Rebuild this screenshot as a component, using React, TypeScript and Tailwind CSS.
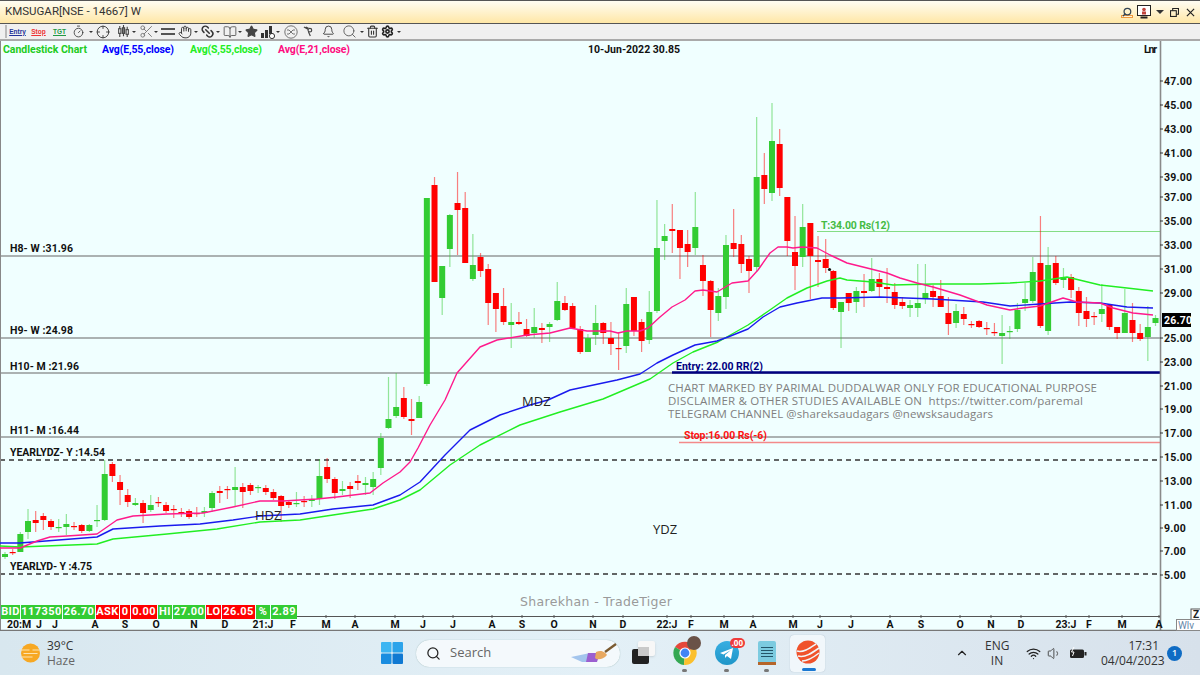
import {
  Bell,
  BookOpen,
  Crosshair,
  Hand,
  Link2,
  Scissors,
  Search,
  Settings,
  Star,
  Timer,
  Trash2,
  Volume1,
  Wifi,
  ChevronUp,
} from 'lucide-react';

// [green?, bodyTop, bodyBottom, wickTop, wickBottom], one per week, in page pixels
const candles: [number, number, number, number, number][] = [
  [1, 554, 557, 552, 559], [0, 552, 553, 549, 555], [1, 534, 552, 532, 552], [1, 521, 532, 509, 539],
  [0, 520, 523, 511, 532], [0, 516, 520, 513, 530], [0, 521, 527, 519, 530], [1, 527, 528, 519, 532],
  [1, 524, 527, 514, 535], [0, 526, 527, 522, 530], [0, 525, 531, 524, 533], [1, 525, 531, 524, 532],
  [1, 520, 521, 505, 527], [1, 474, 520, 460, 521], [0, 464, 476, 462, 482], [0, 482, 490, 475, 505],
  [0, 495, 502, 489, 507], [1, 503, 505, 498, 506], [0, 503, 513, 500, 523], [1, 505, 510, 495, 512],
  [0, 502, 503, 497, 507], [0, 505, 511, 502, 513], [0, 509, 510, 505, 518], [0, 512, 513, 508, 517],
  [0, 511, 517, 509, 519], [0, 513, 514, 507, 517], [1, 511, 513, 507, 517], [1, 493, 508, 491, 512],
  [0, 491, 493, 486, 503], [0, 489, 490, 486, 499], [1, 487, 490, 467, 507], [0, 487, 492, 483, 508],
  [0, 485, 491, 483, 495], [1, 487, 488, 485, 493], [0, 488, 492, 485, 495], [0, 492, 498, 489, 500],
  [0, 496, 506, 495, 522], [0, 502, 505, 500, 508], [1, 503, 504, 492, 507], [0, 501, 502, 496, 507],
  [1, 499, 501, 495, 507], [1, 476, 499, 459, 505], [0, 467, 479, 458, 483], [0, 479, 493, 477, 499],
  [1, 489, 491, 481, 495], [0, 486, 489, 482, 498], [0, 481, 483, 475, 490], [1, 483, 485, 477, 495],
  [1, 479, 487, 472, 495], [1, 438, 468, 433, 475], [1, 419, 428, 377, 429], [1, 407, 416, 373, 418],
  [0, 398, 417, 387, 419], [0, 419, 421, 399, 435], [1, 402, 418, 396, 418], [1, 198, 384, 198, 386],
  [0, 185, 282, 177, 282], [1, 266, 298, 266, 315], [1, 215, 249, 214, 267], [0, 203, 210, 172, 255],
  [0, 208, 263, 192, 263], [1, 265, 279, 234, 281], [0, 257, 271, 253, 277], [0, 269, 303, 264, 325],
  [0, 293, 309, 293, 332], [0, 306, 322, 288, 325], [1, 322, 325, 303, 348], [0, 322, 324, 312, 325],
  [0, 329, 336, 319, 337], [1, 327, 333, 308, 338], [0, 328, 330, 323, 343], [1, 324, 327, 322, 342],
  [1, 301, 320, 282, 321], [0, 303, 310, 296, 311], [0, 306, 328, 303, 328], [0, 329, 352, 326, 354],
  [1, 338, 352, 334, 352], [1, 323, 335, 305, 345], [0, 323, 333, 322, 344], [0, 338, 344, 322, 355],
  [0, 348, 349, 332, 370], [1, 304, 346, 288, 353], [0, 297, 331, 297, 336], [0, 322, 341, 319, 352],
  [1, 312, 340, 291, 344], [1, 248, 311, 200, 313], [1, 236, 241, 224, 260], [0, 229, 231, 204, 253],
  [0, 230, 248, 230, 279], [0, 244, 252, 230, 267], [1, 227, 248, 192, 255], [0, 265, 281, 255, 296],
  [0, 281, 310, 280, 337], [1, 296, 313, 288, 321], [1, 245, 297, 235, 309], [0, 243, 249, 209, 257],
  [0, 244, 264, 235, 273], [0, 259, 271, 256, 293], [1, 177, 267, 117, 272], [0, 175, 189, 153, 204],
  [1, 141, 193, 103, 201], [0, 144, 188, 129, 196], [0, 197, 241, 197, 256], [0, 252, 266, 216, 290],
  [1, 227, 257, 204, 267], [0, 223, 256, 223, 299], [0, 260, 262, 236, 287], [0, 259, 268, 239, 273],
  [0, 271, 308, 270, 310], [1, 302, 312, 302, 348], [0, 293, 303, 293, 311], [1, 291, 302, 287, 313],
  [0, 291, 293, 274, 307], [1, 279, 291, 258, 292], [0, 279, 287, 273, 297], [0, 287, 289, 268, 303],
  [0, 292, 305, 283, 309], [0, 302, 306, 297, 309], [1, 305, 308, 300, 317], [1, 303, 308, 264, 317],
  [1, 293, 299, 264, 304], [0, 291, 297, 285, 307], [0, 296, 307, 280, 307], [0, 313, 324, 297, 335],
  [1, 311, 323, 304, 328], [0, 314, 319, 307, 325], [0, 324, 325, 321, 328], [0, 321, 327, 320, 328],
  [0, 328, 329, 322, 335], [0, 332, 333, 323, 336], [1, 333, 336, 315, 364], [1, 331, 332, 326, 339],
  [1, 310, 329, 303, 332], [1, 299, 303, 283, 311], [1, 272, 301, 257, 303], [0, 263, 326, 216, 328],
  [1, 265, 331, 247, 335], [0, 263, 283, 256, 285], [1, 277, 280, 268, 288], [0, 277, 290, 274, 298],
  [0, 291, 313, 287, 326], [0, 311, 319, 297, 327], [0, 316, 317, 312, 325], [1, 309, 314, 284, 322],
  [0, 305, 327, 304, 330], [0, 327, 333, 327, 339], [1, 313, 333, 289, 333], [0, 320, 333, 303, 342],
  [0, 333, 339, 324, 341], [1, 327, 337, 306, 361], [1, 318, 323, 315, 326],
];

const emaFast = '0,548 20,548 37,541 50,537 67,536 97,534 107,527 117,520 133,516 167,514 203,513 233,507 260,501 283,501 317,499 337,497 370,493 383,483 400,472 410,462 418,448 430,425 445,400 457,373 480,347 497,340 527,335 550,333 570,328 587,331 610,331 618,333 627,331 640,331 648,328 660,317 672,307 685,300 695,291 703,290 717,292 732,283 748,281 758,270 770,253 778,247 787,247 793,248 802,247 817,248 830,255 847,263 867,268 887,273 900,278 917,283 933,287 960,295 987,305 1010,310 1023,308 1040,306 1063,298 1077,302 1100,303 1113,308 1133,313 1153,315';
const emaSlow = '0,543 20,543 97,537 113,529 160,526 200,524 233,520 260,516 300,514 333,509 373,505 400,495 420,482 445,455 470,430 500,415 530,405 548,400 570,390 617,380 640,374 657,363 673,355 695,345 717,341 728,337 748,329 763,317 780,307 797,303 822,298 840,298 880,297 933,299 983,302 1010,306 1040,304 1070,302 1100,303 1127,307 1153,308';
const smaSlow = '0,546 20,547 97,544 113,539 167,534 217,529 260,522 300,520 333,515 373,509 400,500 420,490 450,465 480,445 520,425 560,412 603,399 650,379 673,363 693,352 718,342 748,325 767,312 787,298 807,288 827,281 840,278 847,280 873,282 893,285 933,284 980,284 1010,283 1040,281 1067,277 1100,285 1127,288 1153,291';

const priceTicks: [string, number][] = [
  ['47.00', 81], ['45.00', 105], ['43.00', 129], ['41.00', 153], ['39.00', 177], ['37.00', 197], ['35.00', 221],
  ['33.00', 245], ['31.00', 269], ['29.00', 293], ['25.00', 338], ['23.00', 362], ['21.00', 386], ['19.00', 409],
  ['17.00', 433], ['15.00', 457], ['13.00', 481], ['11.00', 505], ['9.00', 528], ['7.00', 551], ['5.00', 575],
];

const monthTicks: [string, number][] = [
  ['20:M', 19], ['J', 39], ['J', 55], ['A', 95], ['S', 125], ['O', 156], ['N', 194], ['D', 225], ['21:J', 263], ['F', 293],
  ['M', 326], ['A', 355], ['M', 395], ['J', 423], ['J', 453], ['A', 492], ['S', 522], ['O', 554], ['N', 593], ['D', 623],
  ['22:J', 667], ['F', 691], ['M', 724], ['A', 753], ['M', 793], ['J', 820], ['J', 851], ['A', 890], ['S', 921], ['O', 960],
  ['N', 991], ['D', 1021], ['23:J', 1066], ['F', 1089], ['M', 1122], ['A', 1159],
];

const levels: [string, number, number, number][] = [
  ['H8- W :31.96', 10, 252, 63],
  ['H9- W :24.98', 10, 334, 63],
  ['H10- M :21.96', 10, 370, 69],
  ['H11- M :16.44', 10, 434, 69],
  ['YEARLYDZ- Y :14.54', 10, 456, 95],
  ['YEARLYD- Y :4.75', 10, 570, 82],
];

const quote: [string, string, number][] = [
  ['BID', 'g', 19], ['117350', 'g', 41], ['26.70', 'g', 32], ['ASK', 'r', 23], ['0', 'r', 10], ['0.00', 'r', 26],
  ['HI', 'g', 14], ['27.00', 'g', 32], ['LO', 'r', 15], ['26.05', 'r', 33], ['%', 'g', 14], ['2.89', 'g', 26],
];

function Caret({ className }: { className: string }) {
  return <span className={`h-0 w-0 border-x-[2px] border-t-[2px] border-x-transparent border-t-[#333] ${className}`} />;
}

function ChartArea() {
  return (
    <div className="h-[590px] w-full bg-[#f0ffff]">
      <svg viewBox="0 41 1200 590" className="block h-full w-full font-['Roboto',sans-serif]">
        {/* support / resistance levels */}
        <g fill="none">
          <path d="M0 256H1160M0 338H1160M0 373H1160M0 437H1160" stroke="#666" strokeWidth="1.2" />
          <path d="M0 460H1160M0 574H1160" stroke="#333" strokeWidth="1.4" strokeDasharray="5 4" />
          <path d="M817 231.5H1160" stroke="#85dd85" strokeWidth="1.2" />
          <path d="M679 442.5H1160" stroke="#f38a8a" strokeWidth="1.3" />
          <path d="M0.5 41V631" stroke="#888" />
        </g>

        {candles.map(([up, bodyTop, bodyBottom, wickTop, wickBottom], i) => {
          const x = 5 + 7.67 * i;
          const color = up ? '#33cc33' : '#ff0000';
          return (
            <g key={i}>
              <rect x={x - 0.6} y={wickTop} width={1.2} height={wickBottom - wickTop} fill={color} opacity={0.5} />
              <rect x={x - 3} y={bodyTop} width={6} height={Math.max(bodyBottom - bodyTop, 1.2)} fill={color} />
            </g>
          );
        })}

        <polyline points={smaSlow} fill="none" stroke="#22ee22" strokeWidth="1.4" strokeLinejoin="round" />
        <polyline points={emaSlow} fill="none" stroke="#1a1aee" strokeWidth="1.4" strokeLinejoin="round" />
        <polyline points={emaFast} fill="none" stroke="#ff1a8c" strokeWidth="1.4" strokeLinejoin="round" />
        <path d="M672 372.5H1160" stroke="#000080" strokeWidth="2.4" />
        <circle cx="829.5" cy="269.5" r="1.6" fill="#111" />

        {/* legend */}
        <g fontSize="10.5" fontWeight="700">
          <text x="3" y="53" fill="#22cc22" textLength="84">Candlestick Chart</text>
          <text x="102" y="53" fill="#0000ff" textLength="72">Avg(E,55,close)</text>
          <text x="190" y="53" fill="#22ee22" textLength="72">Avg(S,55,close)</text>
          <text x="278" y="53" fill="#ff0d80" textLength="72">Avg(E,21,close)</text>
          <text x="588" y="53" fill="#111" textLength="92">10-Jun-2022 30.85</text>
          <text x="1144" y="53" fill="#111" textLength="13">Lnr</text>
        </g>

        {levels.map(([label, x, y, width]) => (
          <text key={label} x={x} y={y} fontSize="10.5" fontWeight="700" fill="#111" textLength={width}>{label}</text>
        ))}

        <g fontSize="10.5" fontWeight="700">
          <text x="821" y="229" fill="#44bb44" textLength="69">T:34.00 Rs(12)</text>
          <text x="676" y="370" fill="#000080" textLength="87">Entry: 22.00 RR(2)</text>
          <text x="684" y="439" fill="#ff1111" textLength="83">Stop:16.00 Rs(-6)</text>
        </g>

        <g fontSize="11.5" fill="#808080" className="font-['Open_Sans',sans-serif]">
          <text x="668" y="392" textLength="429">CHART MARKED BY PARIMAL DUDDALWAR ONLY FOR EDUCATIONAL PURPOSE</text>
          <text x="668" y="405" textLength="415" className="whitespace-pre">DISCLAIMER &amp; OTHER STUDIES AVAILABLE ON  https://twitter.com/paremal</text>
          <text x="668" y="418" textLength="325">TELEGRAM CHANNEL @shareksaudagars @newsksaudagars</text>
        </g>

        <g fontSize="13" fill="#222" className="font-['Open_Sans',sans-serif]">
          <text x="522" y="406">MDZ</text>
          <text x="255" y="520">HDZ</text>
          <text x="653" y="534">YDZ</text>
        </g>
        <text x="520" y="606" fontSize="12.5" fill="#9a9a9a" textLength="152" className="font-['DejaVu_Sans',sans-serif]">Sharekhan - TradeTiger</text>

        {/* price axis */}
        <path d="M1160.5 41V631" stroke="#8a8a8a" strokeWidth="1.6" />
        {priceTicks.map(([label, y]) => (
          <g key={label}>
            <path d={`M1160 ${y}H1163`} stroke="#333" />
            <text x="1164" y={y + 4} fontSize="10.5" fontWeight="700" fill="#111" letterSpacing="0.2">{label}</text>
          </g>
        ))}
        <rect x="1162" y="313" width="29" height="14" fill="#000" />
        <text x="1164" y="324" fontSize="10.5" fontWeight="700" fill="#fff" letterSpacing="0.2">26.70</text>

        {/* time axis */}
        <path d="M297 616.5H1160" stroke="#555" />
        {monthTicks.map(([label, x], i) => (
          <g key={i}>
            {x > 300 && <path d={`M${x} 615V618`} stroke="#555" />}
            <text x={x} y="628" fontSize="10.5" fontWeight="700" fill="#111" textAnchor="middle">{label}</text>
          </g>
        ))}
        <path d="M0 630.5H1200" stroke="#777" strokeWidth="1.5" />
        <rect x="1191" y="609" width="10" height="11" fill="#fff" stroke="#555" />
        <text x="1193" y="618" fontSize="10" fontWeight="700" fill="#222">Z</text>
        <rect x="1176.5" y="619.5" width="30" height="11" fill="#fff" stroke="#888" />
        <text x="1178" y="629" fontSize="10" fill="#6688aa">Wlv</text>
      </svg>
    </div>
  );
}

function TitleBar() {
  return (
    <div className="flex h-[24px] items-center border-y border-[#555] bg-gradient-to-b from-[#fffdf2] to-[#ffe7a6] pl-[5px] pr-[4px] font-['Roboto',sans-serif] text-[11.5px] text-[#333]">
      <span className="flex-1">KMSUGAR[NSE - 14667] W</span>
      <div className="mr-[3px] flex flex-col items-center">
        <Search className="-mb-[2px] h-[10px] w-[10px] -scale-x-100 text-[#345]" strokeWidth={3} />
        <span className="h-[3px] w-[12px] border border-[#f19a3e] bg-[#fff3dc]" />
      </div>
      <svg viewBox="0 0 14 14" className="ml-[1px] h-[14px] w-[14px]">
        <rect x="0.5" y="0.5" width="13" height="10" fill="#fff" stroke="#222" />
        <circle cx="7" cy="4.5" r="1.8" fill="#c0443c" />
        <rect x="5" y="6.5" width="4" height="3" fill="#c0443c" />
        <rect x="3.5" y="11.5" width="7" height="2" fill="#222" />
      </svg>
      <span className="ml-[5px] h-0 w-0 border-x-[4px] border-t-[4px] border-x-transparent border-t-[#333]" />
      <svg viewBox="0 0 10 10" className="ml-[6px] h-[9px] w-[9px]" fill="none" stroke="#222" strokeWidth="1.2">
        <rect x="0.6" y="3" width="6.4" height="6.4" />
        <path d="M3 3V.6H9.4V7H7" />
      </svg>
      <svg viewBox="0 0 10 10" className="ml-[7px] mr-[1px] h-[9px] w-[9px]" stroke="#222" strokeWidth="1.3">
        <path d="M1 1 9 9M9 1 1 9" />
      </svg>
    </div>
  );
}

function Toolbar() {
  return (
    <div className="flex h-[17px] items-center border-b-2 border-[#aaa] bg-[#f0f0f0] pl-[5px] text-[#333]">
      <span className="h-[13px] w-[2px] border-x border-[#bbb]" />
      <span className="w-[21px] text-center font-['Liberation_Sans',sans-serif] text-[6.5px] font-bold text-[#223399] underline">Entry</span>
      <span className="w-[21px] text-center font-['Liberation_Sans',sans-serif] text-[6.5px] font-bold text-[#ee3333] underline">Stop</span>
      <span className="w-[21px] text-center font-['Liberation_Sans',sans-serif] text-[6.5px] font-bold text-[#229944] underline">TGT</span>
      <Timer className="ml-[2px] h-[13px] w-[13px]" strokeWidth={1.5} />
      <Caret className="ml-[4px]" />
      <Crosshair className="ml-[3px] h-[14px] w-[14px]" strokeWidth={1.5} />
      <svg viewBox="0 0 14 14" className="ml-[7px] h-[13px] w-[13px]" fill="none" stroke="#444" strokeWidth="1.2">
        <path d="M3 1V13M7 0V12M11 2V13" />
        <rect x="1.8" y="4" width="2.4" height="5" fill="#fff" />
        <rect x="5.8" y="3" width="2.4" height="6" fill="#777" />
        <rect x="9.8" y="5" width="2.4" height="5" fill="#fff" />
      </svg>
      <Caret className="ml-[2px]" />
      <Scissors className="ml-[3px] h-[15px] w-[15px] text-[#777]" strokeWidth={1.5} />
      <Caret className="ml-0" />
      <span className="ml-[3px] h-[7px] w-[14px] border-y-2 border-[#555]" />
      <Hand className="ml-[3px] h-[14px] w-[14px]" strokeWidth={1.6} />
      <Caret className="ml-[2px]" />
      <Link2 className="ml-[2px] h-[15px] w-[15px] rotate-45" strokeWidth={2.4} />
      <Caret className="ml-px" />
      <BookOpen className="ml-[3px] h-[14px] w-[14px] text-[#555]" strokeWidth={1.5} />
      <Caret className="ml-px" />
      <Star className="ml-[3px] h-[13px] w-[13px] fill-[#444] text-[#444]" />
      <svg viewBox="0 0 14 14" className="ml-[3px] h-[14px] w-[14px]" fill="#333">
        <rect x="0" y="8" width="3" height="5" />
        <rect x="4" y="5" width="3" height="8" />
        <rect x="8" y="1" width="3" height="8" />
        <circle cx="11" cy="11" r="2.6" fill="#fff" stroke="#333" />
      </svg>
      <Caret className="ml-px" />
      <svg viewBox="0 0 14 14" className="ml-[4px] h-[14px] w-[14px]" fill="none" stroke="#666" strokeWidth="0.9">
        <circle cx="7" cy="7" r="6.2" />
        <path d="M3 5H5L9 9H11M3 9H5L9 5H11" />
      </svg>
      <svg viewBox="0 0 12 12" className="ml-[5px] h-[11px] w-[11px]" fill="none" stroke="#444" strokeWidth="1.3">
        <circle cx="7.5" cy="4.5" r="2" />
        <path d="M6 6.5 8 11M1 1 5.5 3.5M3 1 6 2.5" />
      </svg>
      <Bell className="ml-[8px] h-[13px] w-[13px]" strokeWidth={1.6} />
      <Search className="ml-[7px] h-[15px] w-[15px] text-[#555]" strokeWidth={1.4} />
      <Caret className="ml-[3px]" />
      <Trash2 className="ml-[2px] h-[13px] w-[13px]" strokeWidth={2} />
      <Settings className="ml-[2px] h-[13px] w-[13px] text-[#222]" strokeWidth={3} />
      <Caret className="ml-[3px]" />
    </div>
  );
}

function QuoteStrip() {
  return (
    <div className="-mt-[26px] flex h-[14px] pl-[1px] font-['Roboto',sans-serif] text-[11px] font-bold leading-[14px] tracking-[0.4px] text-white">
      {quote.map(([label, tone, width], i) => (
        <span
          key={i}
          style={{ width }}
          className={`mr-px text-center ${tone === 'g' ? 'bg-[#33cc33]' : 'bg-[#ff0000]'}`}
        >
          {label}
        </span>
      ))}
    </div>
  );
}

function Taskbar() {
  return (
    <div className="mt-[12px] flex h-[44px] items-center bg-gradient-to-r from-[#d8e7ef] via-[#e3f0f7] to-[#d7e1eb] font-['Open_Sans',sans-serif]">
      {/* weather */}
      <svg viewBox="0 0 22 20" className="ml-[18px] h-[20px] w-[23px]">
        <circle cx="12" cy="10" r="9.5" fill="#f7a823" />
        <path d="M1 7H11M14 7H21M5 10.5H19M2 14H14" stroke="#fde3b0" strokeWidth="1.2" />
      </svg>
      <div className="ml-[6px] w-[60px] text-[12px] leading-[15px]">
        <div className="text-[#333]">39°C</div>
        <div className="text-[#666]">Haze</div>
      </div>

      {/* start */}
      <svg viewBox="0 0 22 22" className="ml-[274px] h-[22px] w-[22px]">
        <rect x="0" y="0" width="10.5" height="10.5" rx="1" fill="#3db5f2" />
        <rect x="11.5" y="0" width="10.5" height="10.5" rx="1" fill="#2ba3ea" />
        <rect x="0" y="11.5" width="10.5" height="10.5" rx="1" fill="#1a8de0" />
        <rect x="11.5" y="11.5" width="10.5" height="10.5" rx="1" fill="#1079d2" />
      </svg>

      {/* search pill */}
      <div className="ml-[13px] flex h-[27px] w-[204px] items-center rounded-full bg-[#f4f9fc] pl-[10px] shadow-[0_0_1px_#8aa]">
        <Search className="h-[15px] w-[15px] text-[#222]" strokeWidth={2} />
        <span className="ml-[9px] flex-1 text-[13px] text-[#666]">Search</span>
        <svg viewBox="0 0 48 20" className="mr-[2px] h-[20px] w-[48px]">
          <path d="M1 14 L20 10 L28 11 L26 19 L12 19 Z" fill="#8fb8e8" opacity="0.8" />
          <path d="M18 10 L30 10 L27 19 L16 19 Z" fill="#9b5fd0" />
          <path d="M26 9 C32 6 36 10 37 12 C33 17 27 17 25 15 Z" fill="#e8a860" />
          <path d="M35 9 L46 1" stroke="#7a5a30" strokeWidth="2.4" />
        </svg>
      </div>

      {/* task view */}
      <div className="relative ml-[12px] h-[24px] w-[23px]">
        <div className="absolute left-[6px] top-0 h-[15px] w-[17px] rounded-[2px] bg-[#f7f7f7] shadow-sm" />
        <div className="absolute bottom-[1px] left-0 h-[15px] w-[17px] rounded-[2px] bg-[#222]" />
        <div className="absolute left-[6px] top-[6px] h-[9px] w-[11px] bg-[#c9c9c9]" />
      </div>

      {/* chrome */}
      <div className="relative ml-[18px] h-[24px] w-[24px]">
        <svg viewBox="0 0 24 24" className="h-[24px] w-[24px]">
          <path d="M12 12 L2 6 A12 12 0 0 1 22 6 Z" fill="#e5463a" />
          <path d="M12 12 L2 6 A12 12 0 0 0 11 24 Z" fill="#34a853" />
          <path d="M12 12 L22 6 A12 12 0 0 1 11 24 Z" fill="#fbc02d" />
          <circle cx="12" cy="12" r="5.6" fill="#fff" />
          <circle cx="12" cy="12" r="4.4" fill="#4285f4" />
        </svg>
        <div className="absolute -right-[4px] -top-[5px] h-[14px] w-[14px] rounded-full bg-[#6a5248]" />
        <div className="absolute bottom-[-7px] left-[9px] h-[3px] w-[5px] rounded-full bg-[#777]" />
      </div>

      {/* telegram */}
      <div className="relative ml-[18px] h-[24px] w-[24px] rounded-full bg-gradient-to-b from-[#37aee2] to-[#1e96c8]">
        <svg viewBox="0 0 24 24" className="h-[24px] w-[24px]">
          <path d="M5 12 18 7 16 18 12 15 10 17 10 14 16 9 8.5 13.5Z" fill="#fff" />
        </svg>
        <span className="absolute -right-[6px] -top-[3px] rounded-full bg-[#ef3b3b] px-[2px] text-[8px] font-bold leading-[10px] text-white">.00</span>
        <div className="absolute bottom-[-7px] left-[9px] h-[3px] w-[5px] rounded-full bg-[#777]" />
      </div>

      {/* notepad */}
      <div className="relative ml-[19px] h-[24px] w-[18px] rounded-t-[2px] border-b-[3px] border-[#b5652a] bg-[#7ccbe0]">
        <div className="mx-[3px] mt-[6px] flex flex-col gap-[2px]">
          <span className="h-px bg-[#24566a]" />
          <span className="h-px bg-[#24566a]" />
          <span className="h-px bg-[#24566a]" />
          <span className="h-px bg-[#24566a]" />
        </div>
        <div className="absolute bottom-[-10px] left-[6px] h-[3px] w-[5px] rounded-full bg-[#777]" />
      </div>

      {/* active app */}
      <div className="relative ml-[14px] flex h-[37px] w-[35px] items-start justify-center rounded-[4px] bg-[#f1f7fb] pt-[5px] shadow-[0_0_1px_#9ab]">
        <svg viewBox="0 0 24 24" className="h-[24px] w-[24px]">
          <circle cx="12" cy="12" r="11.5" fill="#f0522c" />
          <path d="M1 11C7 13 14 8 20 4M2 16C9 18 16 13 23 8M6 21C12 21 18 17 23 13" stroke="#f1f7fb" strokeWidth="1.6" fill="none" />
        </svg>
        <div className="absolute bottom-[1px] left-[12px] h-[3px] w-[14px] rounded-full bg-[#1a78d2]" />
      </div>

      {/* tray */}
      <ChevronUp className="ml-[130px] h-[14px] w-[14px] text-[#222]" strokeWidth={2} />
      <div className="ml-[16px] w-[24px] text-center text-[12px] leading-[15px] text-[#333]">
        <div>ENG</div>
        <div>IN</div>
      </div>
      <Wifi className="ml-[17px] h-[15px] w-[15px] text-[#222]" strokeWidth={2} />
      <Volume1 className="ml-[6px] h-[15px] w-[15px] text-[#444]" strokeWidth={1.5} />
      <svg viewBox="0 0 18 12" className="ml-[7px] h-[12px] w-[18px]">
        <rect x="1" y="2.5" width="14" height="8.5" rx="1.5" fill="#222" />
        <rect x="15.5" y="5" width="2" height="3.5" fill="#222" />
        <path d="M5 0 2.5 5H5L3.5 9" stroke="#fff" strokeWidth="1" fill="none" />
      </svg>
      <div className="ml-[14px] w-[58px] text-right text-[12px] leading-[15px] text-[#333]">
        <div>17:31</div>
        <div className="whitespace-nowrap">04/04/2023</div>
      </div>
      <div className="ml-[8px] flex h-[15px] w-[15px] items-center justify-center rounded-full bg-[#0f6cc4] text-[9px] font-semibold text-white">1</div>
    </div>
  );
}

export default function App() {
  return (
    <div className="h-[675px] w-[1200px] overflow-hidden bg-[#f0ffff]">
      <TitleBar />
      <Toolbar />
      <ChartArea />
      <QuoteStrip />
      <Taskbar />
    </div>
  );
}
